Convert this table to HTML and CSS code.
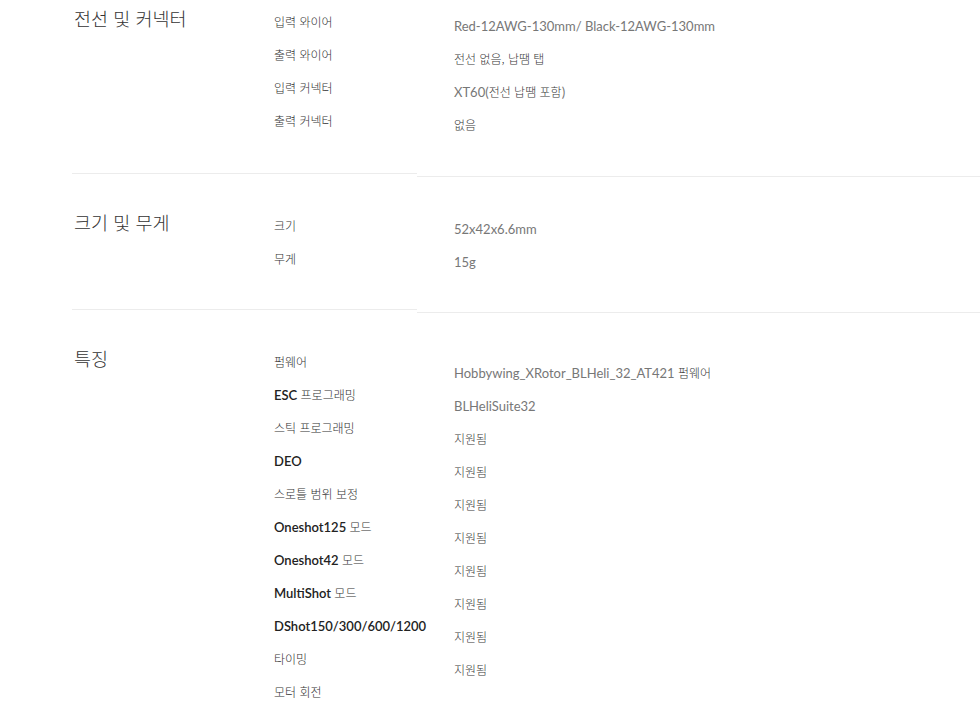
FILE: index.html
```html
<!DOCTYPE html>
<html lang="ko">
<head>
    <meta charset="UTF-8">
    <meta name="viewport" content="width=device-width, initial-scale=1.0">
    <title>사양</title>
    <link rel="stylesheet" href="styles.css">
</head>
<body>
    <div class="spec">
        <div class="spec-names">
            <div class="group group-wire">
                <h2 class="group-title">전선 및 커넥터</h2>
                <ul class="labels">
                    <li>입력 와이어</li>
                    <li>출력 와이어</li>
                    <li>입력 커넥터</li>
                    <li>출력 커넥터</li>
                </ul>
            </div>
            <div class="group">
                <h2 class="group-title">크기 및 무게</h2>
                <ul class="labels">
                    <li>크기</li>
                    <li>무게</li>
                </ul>
            </div>
            <div class="group group-last">
                <h2 class="group-title">특징</h2>
                <ul class="labels">
                    <li>펌웨어</li>
                    <li><b>ESC</b> 프로그래밍</li>
                    <li>스틱 프로그래밍</li>
                    <li><b>DEO</b></li>
                    <li>스로틀 범위 보정</li>
                    <li><b>Oneshot125</b> 모드</li>
                    <li><b>Oneshot42</b> 모드</li>
                    <li><b>MultiShot</b> 모드</li>
                    <li><b>DShot150/300/600/1200</b></li>
                    <li>타이밍</li>
                    <li>모터 회전</li>
                </ul>
            </div>
        </div>

        <div class="spec-values">
            <div class="group group-wire">
                <ul class="values">
                    <li><span class="en">Red-12AWG-130mm/ Black-12AWG-130mm</span></li>
                    <li>전선 없음, 납땜 탭</li>
                    <li><span class="en">XT60(</span>전선 납땜 포함<span class="en">)</span></li>
                    <li>없음</li>
                </ul>
            </div>
            <div class="group">
                <ul class="values">
                    <li><span class="en">52x42x6.6mm</span></li>
                    <li><span class="en">15g</span></li>
                </ul>
            </div>
            <div class="group group-features">
                <ul class="values">
                    <li><span class="en">Hobbywing_XRotor_BLHeli_32_AT421</span> 펌웨어</li>
                    <li><span class="en">BLHeliSuite32</span></li>
                    <li>지원됨</li>
                    <li>지원됨</li>
                    <li>지원됨</li>
                    <li>지원됨</li>
                    <li>지원됨</li>
                    <li>지원됨</li>
                    <li>지원됨</li>
                    <li>지원됨</li>
                </ul>
            </div>
        </div>
    </div>
</body>
</html>
```

FILE: styles.css
```css
:root {
    --title-color: #333333;
    --label-color: #333333;
    --value-color: #3a3a3a;
    --value-en-color: #777777;
    --line-color: #ececec;
    --row-height: 33px;
}
body {
    margin: 0;
    background: #ffffff;
    font-family: "Lato", "Noto Sans CJK KR", sans-serif;
    overflow: hidden;
}
.spec {
    display: flex;
    align-items: flex-start;
}
.spec-names {
    width: 345px;
    margin-left: 72px;
    flex-shrink: 0;
}
.spec-values {
    flex: 1;
    padding-left: 37px;
}
.group {
    padding: 35px 0 34px;
    border-bottom: 1px solid var(--line-color);
}
.spec-names .group {
    display: flex;
}
.spec-names .group-wire {
    padding: 5px 0 36px;
}
.spec-values .group-wire {
    padding: 9px 0 35px;
}
.spec-values .group-features {
    padding-top: 43px;
}
.spec-values .group {
    margin-left: -37px;
    padding-left: 37px;
}
.group-last,
.group-features {
    border-bottom: none;
}
.group-title {
    width: 200px;
    flex-shrink: 0;
    margin: 0;
    padding-left: 2px;
    font-family: "Noto Sans CJK KR", sans-serif;
    font-size: 18.5px;
    font-weight: 300;
    line-height: 27px;
    color: var(--title-color);
}
.labels,
.values {
    list-style: none;
    margin: 0;
    padding: 0;
}
.labels li,
.values li {
    height: var(--row-height);
    line-height: var(--row-height);
    white-space: nowrap;
}
.labels li {
    font-family: "Noto Sans CJK KR", sans-serif;
    font-size: 12px;
    font-weight: 300;
    color: var(--label-color);
}
.labels b {
    font-family: "Lato", sans-serif;
    font-size: 13px;
    font-weight: 600;
    color: #222222;
}
.values li {
    font-family: "Noto Sans CJK KR", sans-serif;
    font-size: 12px;
    font-weight: 300;
    color: var(--value-color);
}
.values .en {
    font-family: "Lato", sans-serif;
    font-size: 13px;
    font-weight: 400;
    color: var(--value-en-color);
}
```
